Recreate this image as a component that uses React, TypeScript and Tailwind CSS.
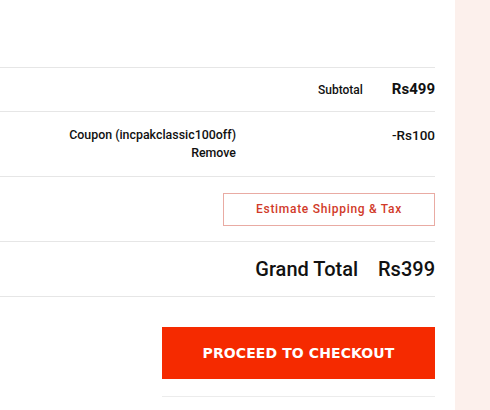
export default function App() {
  return (
    <div className="flex h-[410px] w-[490px] overflow-hidden bg-white font-['Roboto',sans-serif] text-[#111]">
      <div className="w-[455px] shrink-0 pr-[20px]">
        <div className="h-[67px]" />

        {/* subtotal */}
        <div className="flex h-[44px] items-center justify-end border-t border-[#e6e6e6]">
          <span className="text-[12px] font-medium">Subtotal</span>
          <span className="ml-[29px] text-[15px] font-bold">Rs499</span>
        </div>

        {/* coupon */}
        <div className="flex h-[65px] items-start border-t border-[#e6e6e6] pt-[14px]">
          <div className="w-[236px] text-right text-[12.4px] font-medium leading-[18px]">
            <p>Coupon (incpakclassic100off)</p>
            <p>Remove</p>
          </div>
          <div className="flex-1 text-right text-[13.5px] font-medium leading-[18px]">-Rs100</div>
        </div>

        {/* estimate */}
        <div className="flex h-[65px] items-center justify-end border-t border-[#e6e6e6]">
          <button className="h-[33px] w-[212px] border border-[#e9aba3] text-[12px] font-medium tracking-[0.7px] text-[#d13a29]">
            Estimate Shipping &amp; Tax
          </button>
        </div>

        {/* grand total */}
        <div className="flex h-[55px] items-center justify-end border-t border-[#e6e6e6]">
          <span className="text-[20px] font-medium">Grand Total</span>
          <span className="ml-[20px] text-[20px] font-medium">Rs399</span>
        </div>

        <div className="flex flex-col items-end border-t border-[#e6e6e6] pt-[30px]">
          <button className="h-[52px] w-[273px] bg-[#f52a00] font-['DejaVu_Sans',sans-serif] text-[14px] font-bold tracking-[0.1px] text-white">
            PROCEED TO CHECKOUT
          </button>
          <div className="mt-[17px] w-[273px] border-t border-[#ececec]" />
        </div>
      </div>
      <div className="flex-1 bg-[#fcf0ec]" />
    </div>
  );
}
